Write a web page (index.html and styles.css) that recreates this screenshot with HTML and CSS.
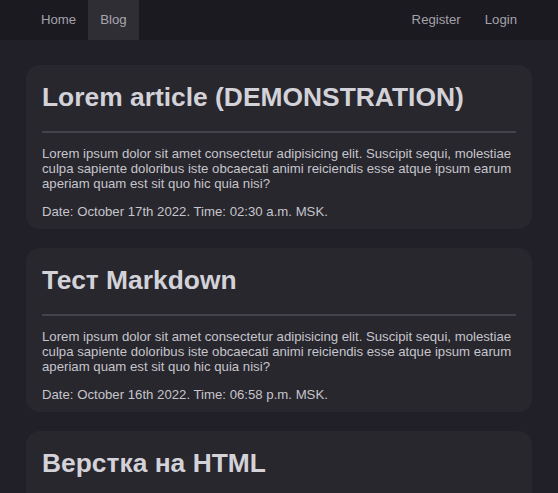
FILE: index.html
```html
<!DOCTYPE html>
<html lang="en">
<head>
<meta charset="utf-8">
<title>Blog</title>
<link rel="stylesheet" href="styles.css">
</head>
<body>
<nav class="navbar">
  <div class="nav-left">
    <a class="nav-link" href="#">Home</a>
    <a class="nav-link active" href="#">Blog</a>
  </div>
  <div class="nav-right">
    <a class="nav-link" href="#">Register</a>
    <a class="nav-link" href="#">Login</a>
  </div>
</nav>
<main class="content">
  <article class="card">
    <h1 class="card-title">Lorem article (DEMONSTRATION)</h1>
    <hr class="divider">
    <p class="card-text">Lorem ipsum dolor sit amet consectetur adipisicing elit. Suscipit sequi, molestiae culpa sapiente doloribus iste obcaecati animi reiciendis esse atque ipsum earum aperiam quam est sit quo hic quia nisi?</p>
    <p class="card-date">Date: October 17th 2022. Time: 02:30 a.m. MSK.</p>
  </article>
  <article class="card">
    <h1 class="card-title">Тест Markdown</h1>
    <hr class="divider">
    <p class="card-text">Lorem ipsum dolor sit amet consectetur adipisicing elit. Suscipit sequi, molestiae culpa sapiente doloribus iste obcaecati animi reiciendis esse atque ipsum earum aperiam quam est sit quo hic quia nisi?</p>
    <p class="card-date">Date: October 16th 2022. Time: 06:58 p.m. MSK.</p>
  </article>
  <article class="card">
    <h1 class="card-title">Верстка на HTML</h1>
    <hr class="divider">
    <p class="card-text">Lorem ipsum dolor sit amet consectetur adipisicing elit. Suscipit sequi, molestiae culpa sapiente doloribus iste obcaecati animi reiciendis esse atque ipsum earum aperiam quam est sit quo hic quia nisi?</p>
    <p class="card-date">Date: October 15th 2022. Time: 04:12 p.m. MSK.</p>
  </article>
</main>
</body>
</html>
```
FILE: styles.css
```css
* { box-sizing: border-box; }
html, body {
  margin: 0;
  padding: 0;
}
body {
  background: #212028;
  font-family: "Liberation Sans", Arial, sans-serif;
  color: #c9c8ce;
  overflow: hidden;
}
.navbar {
  height: 40px;
  background: #1b1a20;
  display: flex;
  justify-content: space-between;
  padding: 0 29px 0 29px;
}
.nav-left, .nav-right {
  display: flex;
}
.nav-link {
  display: flex;
  align-items: center;
  padding: 0 12px 2px 12px;
  height: 40px;
  font-size: 13.2px;
  color: #a3a2aa;
  text-decoration: none;
}
.nav-link.active {
  background: #2f2e35;
  color: #a8a7ae;
}
.content {
  padding: 25px 26px 0 26px;
  display: flex;
  flex-direction: column;
  gap: 19px;
}
.card {
  background: #28272e;
  border-radius: 14px;
  padding: 16px 16px 9px 16px;
}
.card-title {
  margin: 0;
  font-size: 26.4px;
  font-weight: bold;
  line-height: 32px;
  color: #d3d2d8;
}
.divider {
  border: 0;
  height: 2px;
  background: #44434b;
  margin: 18px 0 13px 0;
}
.card-text {
  margin: 0;
  font-size: 13.2px;
  line-height: 15px;
  color: #c6c5cb;
}
.card-date {
  margin: 13px 0 0 0;
  font-size: 13.2px;
  line-height: 16px;
  color: #c6c5cb;
}
```
